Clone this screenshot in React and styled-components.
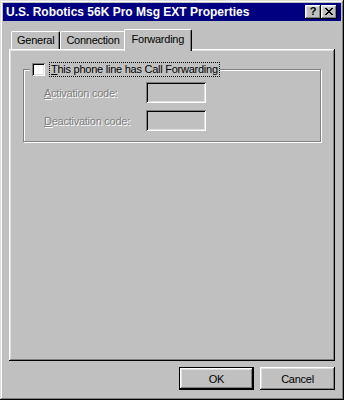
import React from "react";
import styled, { createGlobalStyle, css } from "styled-components";

const Global = createGlobalStyle`
  html, body { margin: 0; padding: 0; background: #c0c0c0; }
  body { font-family: "Liberation Sans", Arial, sans-serif; font-size: 11px; letter-spacing: -0.25px; color: #000; }
`;

const raised = css`
  box-shadow: inset -1px -1px 0 #000, inset 1px 1px 0 #fff,
    inset -2px -2px 0 #808080, inset 2px 2px 0 #dfdfdf;
`;

const sunken = css`
  box-shadow: inset 1px 1px 0 #808080, inset -1px -1px 0 #fff,
    inset 2px 2px 0 #000, inset -2px -2px 0 #dfdfdf;
`;

const Window = styled.div`
  width: 344px;
  height: 400px;
  box-sizing: border-box;
  padding: 3px;
  background: #c0c0c0;
  display: flex;
  flex-direction: column;
  box-shadow: inset -1px -1px 0 #000, inset 1px 1px 0 #dfdfdf,
    inset -2px -2px 0 #808080, inset 2px 2px 0 #fff;
`;

const TitleBar = styled.div`
  height: 18px;
  background: #000080;
  display: flex;
  align-items: center;
  padding: 0 4px 0 3px;
`;

const Title = styled.div`
  flex: 1;
  color: #fff;
  font-weight: bold;
  font-size: 12px;
  letter-spacing: 0;
  white-space: nowrap;
`;

const CaptionButton = styled.div`
  width: 16px;
  height: 14px;
  box-sizing: border-box;
  background: #c0c0c0;
  ${raised};
  display: flex;
  align-items: center;
  justify-content: center;
  font-weight: bold;
  font-size: 11px;
  line-height: 1;
  padding-bottom: 1px;
`;

const Body = styled.div`
  flex: 1;
  display: flex;
  flex-direction: column;
  padding: 8px 6px 7px;
`;

const TabRow = styled.div`
  display: flex;
  align-items: flex-end;
  height: 20px;
  padding-left: 2px;
`;

const Tab = styled.div`
  position: relative;
  box-sizing: border-box;
  height: ${(p) => (p.$active ? "22px" : "18px")};
  margin: ${(p) => (p.$active ? "0 -2px -2px -2px" : "0")};
  padding: ${(p) => (p.$active ? "3px 7px 0" : "2px 5px 0")};
  background: #c0c0c0;
  border-top: 1px solid #fff;
  border-left: 1px solid #fff;
  border-right: 1px solid #000;
  border-radius: 2px 2px 0 0;
  box-shadow: inset -1px 0 0 #808080;
  z-index: ${(p) => (p.$active ? 2 : 1)};
  white-space: nowrap;
`;

const Panel = styled.div`
  flex: 1;
  position: relative;
  background: #c0c0c0;
  ${raised};
  padding: 14px 14px 0;
`;

const Group = styled.div`
  position: relative;
  margin-top: 6px;
  border: 1px solid #808080;
  box-shadow: inset 1px 1px 0 #fff, 1px 1px 0 #fff;
  padding: 12px 0 10px 20px;
  display: flex;
  flex-direction: column;
  gap: 7px;
`;

const Legend = styled.label`
  position: absolute;
  top: -7px;
  left: 6px;
  display: flex;
  align-items: center;
  gap: 5px;
  background: #c0c0c0;
  padding: 0 1px 0 2px;
`;

const CheckBox = styled.span`
  width: 13px;
  height: 13px;
  box-sizing: border-box;
  background: #fff;
  ${sunken};
`;

const FocusText = styled.span`
  outline: 1px dotted #000;
  outline-offset: 0;
  padding: 0 1px;
  line-height: 13px;
`;

const Row = styled.div`
  display: flex;
  align-items: center;
`;

const Label = styled.span`
  width: 102px;
  color: #808080;
  text-shadow: 1px 1px 0 #fff;
`;

const Field = styled.div`
  width: 60px;
  height: 21px;
  box-sizing: border-box;
  background: #c0c0c0;
  ${sunken};
`;

const ButtonRow = styled.div`
  display: flex;
  justify-content: flex-end;
  gap: 6px;
  margin-top: 6px;
`;

const Button = styled.div`
  width: 75px;
  height: 23px;
  box-sizing: border-box;
  display: flex;
  align-items: center;
  justify-content: center;
  background: #c0c0c0;
  ${(p) =>
    p.$default
      ? css`
          box-shadow: inset -1px -1px 0 #000, inset 1px 1px 0 #000,
            inset -2px -2px 0 #000, inset 2px 2px 0 #fff,
            inset -3px -3px 0 #808080, inset 3px 3px 0 #dfdfdf;
        `
      : raised};
`;

const U = styled.span`
  text-decoration: underline;
`;

export default function App() {
  return (
    <>
      <Global />
      <Window>
        <TitleBar>
          <Title>U.S. Robotics 56K Pro Msg EXT Properties</Title>
          <CaptionButton>?</CaptionButton>
          <CaptionButton>
            <svg width="8" height="7" viewBox="0 0 8 7" shapeRendering="crispEdges">
              <path d="M0 0h2v1h-2zM6 0h2v1h-2zM1 1h2v1h-2zM5 1h2v1h-2zM2 2h4v1h-4zM3 3h2v1h-2zM2 4h4v1h-4zM1 5h2v1h-2zM5 5h2v1h-2zM0 6h2v1h-2zM6 6h2v1h-2z" fill="#000" />
            </svg>
          </CaptionButton>
        </TitleBar>
        <Body>
          <TabRow>
            <Tab>General</Tab>
            <Tab>Connection</Tab>
            <Tab $active>Forwarding</Tab>
          </TabRow>
          <Panel>
            <Group>
              <Legend>
                <CheckBox />
                <FocusText>
                  <U>T</U>his phone line has Call Forwarding
                </FocusText>
              </Legend>
              <Row>
                <Label>
                  <U>A</U>ctivation code:
                </Label>
                <Field />
              </Row>
              <Row>
                <Label>
                  <U>D</U>eactivation code:
                </Label>
                <Field />
              </Row>
            </Group>
          </Panel>
          <ButtonRow>
            <Button $default>OK</Button>
            <Button>Cancel</Button>
          </ButtonRow>
        </Body>
      </Window>
    </>
  );
}
